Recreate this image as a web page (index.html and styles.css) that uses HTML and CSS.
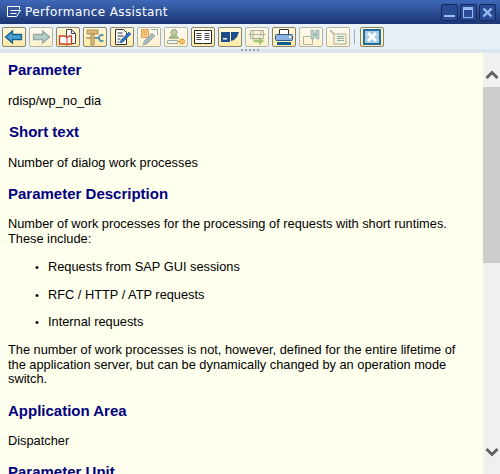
FILE: index.html
```html
<!DOCTYPE html>
<html lang="en">
<head>
  <meta charset="UTF-8" />
  <title>Performance Assistant</title>
  <link rel="stylesheet" href="styles.css">
</head>
<body>
  <header class="titlebar">
    <svg class="title-icon" width="16" height="14" viewBox="0 0 16 14"><path d="M1.500 1.500h12v3M1.500 1.500v10h9M4.500 5.500h10l-4 6M4.500 8.500h6" fill="none" stroke="#fff" stroke-width="1"/></svg>
    <span class="title-text">Performance Assistant</span>
    <div class="win-buttons">
      <div class="win-btn"><svg width="15" height="15" viewBox="0 0 15 15"><rect x="2" y="10" width="11" height="2" fill="#9bbcf5"/></svg></div>
      <div class="win-btn"><svg width="15" height="15" viewBox="0 0 15 15"><path d="M2.500 2.500h9v10h-9z" fill="none" stroke="#9bbcf5"/><rect x="2" y="2" width="10" height="3" fill="#9bbcf5"/></svg></div>
      <div class="win-btn"><svg width="15" height="15" viewBox="0 0 15 15"><path d="M3.500 3.500l8 8M11.500 3.500l-8 8" stroke="#9bbcf5" stroke-width="2.400"/></svg></div>
    </div>
  </header>

  <nav class="toolbar">
    <button class="tool"><svg width="20" height="16" viewBox="0 0 20 16"><path d="M1.500 8l7-6v3.500h9v5h-9V14z" fill="#4a9fd4" stroke="#155f8f" stroke-width="1.300"/></svg></button>
    <button class="tool off"><svg width="20" height="16" viewBox="0 0 20 16"><path d="M18.500 8l-7-6v3.500h-9v5h9V14z" fill="#b4cdc6" stroke="#93aaa2" stroke-width="1.300"/></svg></button>
    <button class="tool"><svg width="20" height="18" viewBox="0 0 20 18"><path d="M8.500 1.500h5l4 4v10h-9z" fill="#fff" stroke="#444"/><path d="M13.500 1.500v4h4" fill="none" stroke="#444"/><path d="M1.500 8h5l2.500 1.500L11.500 8h2v8h-3l-1.500 1-1.500-1h-6z" fill="#fff" stroke="#c8401c" stroke-width="1.400"/><path d="M9 9.500v6.500" stroke="#c8401c"/></svg></button>
    <button class="tool"><svg width="20" height="18" viewBox="0 0 20 18"><path d="M2 2h11v4H2z" fill="#e0b878" stroke="#a89060"/><path d="M6 6h3v11H6z" fill="#e0b878" stroke="#a89060"/><path d="M1 10h5M9 10h5" stroke="#a89060" stroke-width="1.500"/><path d="M18.500 7.500a3 3 0 1 0 0 5" fill="none" stroke="#5f9bb0" stroke-width="2"/><path d="M10 10h5" stroke="#5f9bb0" stroke-width="2"/></svg></button>
    <button class="tool"><svg width="20" height="18" viewBox="0 0 20 18"><path d="M3.500 1.500h8l3 3v12h-11z" fill="#fff" stroke="#333"/><path d="M5.500 5h5M5.500 8h6M5.500 11h3M5.500 14h2" stroke="#333"/><path d="M8 15l1-3 8-8 2 2-8 8z" fill="#2f73c0" stroke="#1c4f8c" stroke-width=".5"/></svg></button>
    <button class="tool off"><svg width="20" height="18" viewBox="0 0 20 18"><path d="M2.500 1.500h7v8h-7z" fill="#f6c880" stroke="#e0a050"/><path d="M4 4h4M4 6h4" stroke="#e0a050"/><path d="M12 1.500h6.500v6" fill="none" stroke="#8fb0b0"/><path d="M4 17l1-4 8-8 3 3-8 8z" fill="#a4b7bb" stroke="#8095a0" stroke-width=".5"/></svg></button>
    <button class="tool off"><svg width="20" height="18" viewBox="0 0 20 18"><circle cx="8" cy="4.500" r="3" fill="#c0cfa2" stroke="#8fa07a"/><path d="M3 11c0-3 2-4 5-4s5 1 5 4z" fill="#a6b98e"/><path d="M1.500 12.500h10v3h-10z" fill="#f4f4e4" stroke="#9aa"/><circle cx="16" cy="13.500" r="2.500" fill="#f6c870" stroke="#d89a30"/><path d="M11 13.500h3" stroke="#d89a30"/></svg></button>
    <button class="tool"><svg width="20" height="16" viewBox="0 0 20 16"><path d="M1.500 1.500h8l.5.5.5-.5h8v13h-8l-.5.5-.5-.5h-8z" fill="#fff" stroke="#222"/><path d="M3.500 4.500h5M3.500 6.500h5M3.500 8.500h5M3.500 10.500h5M11.500 4.500h5M11.500 6.500h5M11.500 8.500h5M11.500 10.500h5" stroke="#444"/></svg></button>
    <button class="tool"><svg width="20" height="14" viewBox="0 0 20 14"><path d="M1 2h9v10H1z" fill="#1e4d8c"/><path d="M11 2h8l-2 5-3 3-3 1z" fill="#1e4d8c"/><path d="M3 8h4v1.500H3z" fill="#fff"/></svg></button>
    <button class="tool off"><svg width="20" height="18" viewBox="0 0 20 18"><path d="M3.500 2.500h13v8h-13z" fill="#f8f4dc" stroke="#b0b098"/><path d="M1.500 6.500h17M6 2v11M14 2v6" stroke="#b0b098"/><path d="M7 11.500h5v-3l5 4.500-5 4.500v-3H7z" fill="#a9c878"/></svg></button>
    <button class="tool"><svg width="20" height="18" viewBox="0 0 20 18"><path d="M5.500 1.500h9v6h-9z" fill="#fff" stroke="#333"/><rect x="1.500" y="6.500" width="17" height="6" rx="1" fill="#8ab2dc" stroke="#2f5f95"/><rect x="15" y="8" width="2" height="2" fill="#fff"/><rect x="3" y="14" width="14" height="3" fill="#0f5f95"/></svg></button>
    <button class="tool off"><svg width="20" height="18" viewBox="0 0 20 18"><path d="M9 8.500H2.500v8h9V11" fill="none" stroke="#a8b4a8"/><path d="M10 2h3v9h-3zM15 2h3v9h-3zM13 5h2v3h-2z" fill="#b4d0c8" stroke="#90aca4" stroke-width=".6"/></svg></button>
    <button class="tool off"><svg width="20" height="18" viewBox="0 0 20 18"><path d="M2 2l5 4h11v10H6V7z" fill="#f8f4dc" stroke="#a0aca0"/><path d="M9 8.500h7M9 10.500h7M9 12.500h7" stroke="#88a8a0"/></svg></button>
    <span class="sep"></span>
    <button class="tool"><svg width="20" height="18" viewBox="0 0 20 18"><rect x="1" y="1" width="18" height="16" fill="#1f6f9f"/><rect x="3" y="3" width="14" height="12" fill="#a9cbe4"/><path d="M6 5l8 8M14 5l-8 8" stroke="#fff" stroke-width="2.800"/></svg></button>
  </nav>

  <div class="grip"><i></i><i></i><i></i><i></i><i></i></div>

  <div class="viewer">
    <main class="content">
      <h2 class="first">Parameter</h2>
      <p>rdisp/wp_no_dia</p>
      <h2 class="shift">Short text</h2>
      <p>Number of dialog work processes</p>
      <h2>Parameter Description</h2>
      <p>Number of work processes for the processing of requests with short runtimes. These include:</p>
      <ul>
        <li>Requests from SAP GUI sessions</li>
        <li>RFC / HTTP / ATP requests</li>
        <li>Internal requests</li>
      </ul>
      <p>The number of work processes is not, however, defined for the entire lifetime of the application server, but can be dynamically changed by an operation mode switch.</p>
      <h2>Application Area</h2>
      <p>Dispatcher</p>
      <h2>Parameter Unit</h2>
    </main>
    <aside class="scrollbar">
      <svg class="arrow" width="16" height="12" viewBox="0 0 16 12"><path d="M2.500 9l5.500-5.500L13.500 9" fill="none" stroke="#606060" stroke-width="3"/></svg>
      <div class="thumb"></div>
      <svg class="arrow down" width="16" height="12" viewBox="0 0 16 12"><path d="M2.500 3L8 8.500 13.500 3" fill="none" stroke="#606060" stroke-width="3"/></svg>
    </aside>
  </div>
</body>
</html>
```

FILE: styles.css
```css
html, body { margin: 0; height: 100%; overflow: hidden; }
body {
  font-family: "Liberation Sans", Arial, sans-serif;
  font-size: 12.8px;
  background-color: #ffffee;
  display: flex;
  flex-direction: column;
}

.titlebar {
  height: 24px;
  flex: none;
  display: flex;
  align-items: center;
  padding: 0 4px 0 6px;
  background: linear-gradient(#3f68b8, #1b3672);
  color: white;
}
.title-icon { margin-right: 3px; }
.title-text {
  font-family: "DejaVu Sans", sans-serif;
  font-size: 12px;
  letter-spacing: 0.4px;
  flex: 1;
}
.win-buttons { display: flex; gap: 2px; }
.win-btn {
  width: 17px;
  height: 17px;
  background: #2a4c94;
  border: 1px solid #16295a;
  border-radius: 2px;
  box-sizing: border-box;
  display: flex;
  align-items: center;
  justify-content: center;
}

.toolbar {
  height: 25px;
  flex: none;
  display: flex;
  align-items: center;
  gap: 3px;
  padding: 0 2px;
  background-color: #e8f0f8;
}
.tool {
  width: 24px;
  height: 20px;
  padding: 0;
  background: linear-gradient(#fff8d8, #ffeaa8);
  border: 1px solid #8a8468;
  border-radius: 2px;
  box-sizing: border-box;
  display: flex;
  align-items: center;
  justify-content: center;
}
.tool.off { background: linear-gradient(#fffaf0, #fff2cc); border-color: #b8b49c; }
.sep { width: 1px; height: 14px; margin: 0 2px 0 1px; background: #a0a8b0; }

.grip {
  height: 4px;
  flex: none;
  display: flex;
  justify-content: center;
  gap: 2px;
  background-color: #dce6ee;
}
.grip i { width: 2px; height: 2px; background: #98a0a8; }

.viewer { flex: 1; min-height: 0; display: flex; }
.content { flex: 1; min-width: 0; padding: 0 13px 0 8px; overflow: hidden; }
h2 {
  font-size: 15px;
  font-weight: bold;
  color: #000080;
  margin: 15px 0;
  line-height: 17px;
}
h2.first { margin: 8px 0 16px; }
h2.shift { margin: 14px 0 16px 1px; }
p { margin: 0; line-height: 14.5px; }
ul { margin: 14px 0 13.5px; padding: 0 0 0 40px; list-style: none; }
li { line-height: 14.5px; }
li + li { margin-top: 13px; }
li::before { content: "•"; display: inline-block; width: 13px; margin-left: -13px; font-size: 11px; }

.scrollbar {
  width: 17px;
  flex: none;
  background-color: #f0f0f0;
  display: flex;
  flex-direction: column;
  align-items: center;
}
.arrow { margin-top: 16px; }
.thumb { width: 100%; height: 176px; margin-top: 6px; background-color: #cdcdcd; }
.arrow.down { margin-top: auto; margin-bottom: 16px; }
```
